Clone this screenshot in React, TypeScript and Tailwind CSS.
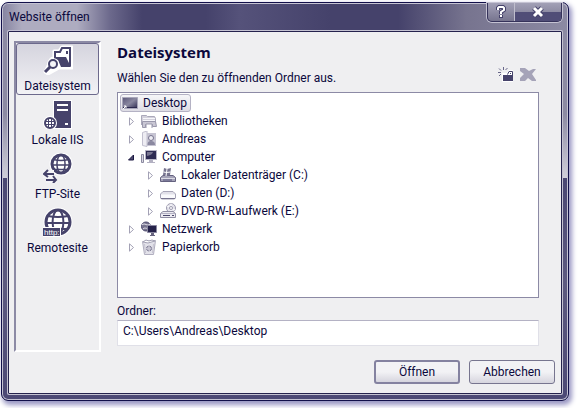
import React from "react";

const INK = "#46436b";

function FileSystemIcon() {
  return (
    <svg width="30" height="30" viewBox="0 0 30 30" aria-hidden="true">
      <path d="M11 6h5l3-4h10v21H16L5 29l-3-2 3-6 3-7 3-2z" fill="#fff" stroke="#fff" strokeWidth="3" strokeLinejoin="round" />
      <path d="M12 12V7h5l2-4h8v18" fill="none" stroke={INK} strokeWidth="2" />
      <path d="M11 12h12l5 10H18l-3-7-4-1z" fill={INK} />
      <path d="M23 6h2v3h-2z" fill={INK} />
      <circle cx="10" cy="19" r="6" fill="#fff" />
      <circle cx="10" cy="19" r="4" fill="#f4f4f7" stroke={INK} strokeWidth="2" />
      <path d="M7 22l-5 5" stroke={INK} strokeWidth="3" />
    </svg>
  );
}

type GlobeProps = { x: number; y: number; r: number; outline: number; line: number };

function Globe({ x, y, r, outline, line }: GlobeProps) {
  const dx = r * 0.85;
  const dy = r * 0.5;
  return (
    <g>
      <circle cx={x} cy={y} r={r + outline / 2 + 1} fill="#fff" />
      <g fill="none" stroke={INK} strokeWidth={line}>
        <circle cx={x} cy={y} r={r} strokeWidth={outline} />
        <ellipse cx={x} cy={y} rx={r * 0.45} ry={r} />
        <path d={`M${x - dx} ${y - dy}Q${x} ${y - dy + 2} ${x + dx} ${y - dy}M${x - r} ${y + 1}h${2 * r}M${x - dx} ${y + dy + 1}h${2 * dx}`} />
      </g>
    </g>
  );
}

function ServerIcon() {
  return (
    <svg width="30" height="30" viewBox="0 0 30 30" aria-hidden="true">
      <path d="M10 1h19v29H10z" fill="#fff" />
      <path d="M11 2h17v27H11z" fill={INK} />
      <path d="M14 5h11v2H14zM14 10h11v2H14zM22 24h3v2h-3z" fill="#fff" />
      <circle cx="7" cy="24" r="7" fill="#fff" />
      <g fill="none" stroke={INK}>
        <circle cx="7" cy="24" r="5" strokeWidth="2" />
        <path d="M2 22.500h10M2 25.500h10M5.500 19v10M8.500 19v10" />
      </g>
    </svg>
  );
}

function FtpIcon() {
  return (
    <svg width="30" height="30" viewBox="0 0 30 30" aria-hidden="true">
      <Globe x={18} y={11} r={9} outline={3} line={1.5} />
      <path d="M0 21h11M3 27h11" fill="none" stroke="#f4f4f7" strokeWidth="8" />
      <path d="M1 21h10M5 17l-4 4 4 3M3 27h10M10 23l3 4-3 3" fill="none" stroke={INK} strokeWidth="2" />
    </svg>
  );
}

function RemoteIcon() {
  return (
    <svg width="30" height="30" viewBox="0 0 30 30" aria-hidden="true">
      <Globe x={15} y={15} r={12} outline={3} line={2} />
      <path d="M0 20h18v10H0z" fill="#fff" />
      <path d="M0 21h17v8H0z" fill={INK} />
      <text x="1" y="28" fontSize="8" fontFamily="Liberation Sans, sans-serif" fill="#fff">http:</text>
    </svg>
  );
}

function NewFolderIcon() {
  return (
    <svg width="16" height="16" viewBox="0 0 16 16" aria-hidden="true">
      <path d="M0 5.500h3M1 1.500l2 2M5.500 0v3M9.500 1l-2 2M1 9l2-2" stroke="#69678a" fill="none" />
      <path d="M4 6h5l2-3h4v12H4z" fill="#fff" />
      <path d="M5 8h10v6H5z" fill={INK} />
      <path d="M9.500 7.500l1.500-3h3.500V9" fill="none" stroke={INK} />
      <path d="M12 6h1v1h-1z" fill={INK} />
    </svg>
  );
}

function DeleteIcon() {
  return (
    <svg width="16" height="14" viewBox="0 0 16 14" aria-hidden="true">
      <path d="M0 0h5l4 3 4-2h3l-4 5 4 6v1h-4l-4-3-3 3H0v-3l4-4-4-3z" fill="#a5a3b8" />
    </svg>
  );
}

function Svg16({ children }: { children: React.ReactNode }) {
  return (
    <svg width="16" height="16" viewBox="0 0 16 16" className="shrink-0" aria-hidden="true">
      {children}
    </svg>
  );
}

function DesktopIcon() {
  return (
    <Svg16>
      <defs>
        <linearGradient id="desk" x1="0" y1="0" x2="1" y2="1">
          <stop offset="0" stopColor="#5a5779" />
          <stop offset=".5" stopColor="#8a88a0" />
          <stop offset="1" stopColor="#2b284e" />
        </linearGradient>
      </defs>
      <path d="M.5 2.500h15v11H.5z" fill="url(#desk)" stroke="#a9a7ba" />
      <path d="M1 12.500h14" stroke="#2b284e" />
      <path d="M1 14l3-3M2 11h2v2" stroke="#fff" fill="none" />
    </Svg16>
  );
}

function LibraryIcon() {
  return (
    <Svg16>
      <path d="M.5 12V2.500h5l1 1h7l1 2V12" fill="#d3d1dc" stroke="#aaa8ba" />
      <path d="M2 5.500h12M2 7.500h12" stroke="#f6f6fa" />
      <path d="M1.500 8.500h13l1 5h-4v-2h-7v3h-3z" fill="#c9c7d4" stroke="#9a98ac" />
      <path d="M5 15v-4h6v4" fill="#fff" stroke="#9a98ac" />
    </Svg16>
  );
}

function UserIcon() {
  return (
    <Svg16>
      <path d="M1.500 1.500L6 0v15.500l-4.500-1z" fill="#eeedf3" stroke="#c2c0cf" />
      <path d="M6 2h9v13H6z" fill="#c6c4d2" />
      <circle cx="10" cy="7" r="2.500" fill="#eeeef3" stroke="#77748f" />
      <path d="M6.500 14c0-3 1-4 3.500-4s4 1 4 4z" fill="#8a88a0" />
    </Svg16>
  );
}

function ComputerIcon() {
  return (
    <Svg16>
      <path d="M.5 5.500h2v8h-2z" fill="#d8d7e1" stroke="#8b89a0" />
      <path d="M4.500 1.500h11v9h-11z" fill="#2d2a52" stroke="#b6b4c5" />
      <path d="M6 3h6c-1 3-3 3-6 4z" fill="#77748f" />
      <path d="M8 11h4v2h2v1H6v-1h2z" fill="#b3b1c2" />
    </Svg16>
  );
}

function SystemDriveIcon() {
  return (
    <Svg16>
      <path d="M3 8.500h10l2.500 2v4H.5v-4z" fill="#a5a3b8" stroke="#64617f" />
      <path d="M1 11.500h14" stroke="#dddce5" />
      <path d="M3 13h9" stroke="#55527a" />
      <path d="M4 1l3 1 4-1-1 7-3 1-4-1z" fill="#77748f" />
      <path d="M7 2L6 9M3.500 5l3 .5 4-.5" stroke="#fff" fill="none" />
    </Svg16>
  );
}

function DriveIcon() {
  return (
    <Svg16>
      <path d="M3 6.500h10l2.500 2.500v4l-1 1h-13l-1-1V9z" fill="#e2e1e9" stroke="#a6a4b6" />
      <path d="M1 9.500h14v3.500H1z" fill="#fafafc" />
      <path d="M1 13.500h14" stroke="#77748f" />
    </Svg16>
  );
}

function DvdIcon() {
  return (
    <Svg16>
      <circle cx="11" cy="5" r="4.500" fill="#e4e3eb" stroke="#9d9baf" />
      <path d="M11 .5v9M7 3l8 4" stroke="#fff" />
      <circle cx="11" cy="5" r="1.500" fill="#fff" stroke="#9d9baf" />
      <path d="M3 8.500h10l2.500 2v4H.5v-4z" fill="#ecebf1" stroke="#8f8da3" />
      <path d="M1 10.500h14" stroke="#b4b2c4" />
      <path d="M3 12.500h7M12 12.500h2" stroke="#4c496d" />
    </Svg16>
  );
}

function NetworkIcon() {
  return (
    <Svg16>
      <circle cx="5" cy="5.500" r="4.500" fill="#77748f" stroke="#4c496d" />
      <path d="M1 4c3-3 5 2 8-1M2 8c2-2 3 0 5-1" stroke="#e6e5ed" fill="none" />
      <path d="M6.500 4.500h9v7h-9z" fill="#25224a" stroke="#8a88a0" />
      <path d="M10 12h3v2h1v1H9v-1h1z" fill="#67647f" />
    </Svg16>
  );
}

function BinIcon() {
  return (
    <Svg16>
      <path d="M1.500 2.500l13-1-2 14h-9z" fill="#e3e2ea" stroke="#b0aebf" />
      <path d="M2 3l5 1 7-2-3-1-3 1-3-1z" fill="#fff" stroke="#a4a2b5" />
      <circle cx="8" cy="9.500" r="2.500" fill="#c6c4d1" stroke="#77748f" strokeDasharray="3 1" />
      <path d="M3.500 5l1 9M12.500 5l-1 9" stroke="#c6c4d1" />
    </Svg16>
  );
}

function Arrow({ open }: { open?: boolean }) {
  return (
    <svg width="7" height="9" viewBox="0 0 7 9" className="shrink-0" aria-hidden="true">
      {open ? (
        <path d="M5.500 2v5H.5z" fill="#4c496d" stroke="#1c1943" />
      ) : (
        <path d="M1.500 .8v7.400L5.500 4.500z" fill="#fff" stroke="#a3a1b5" />
      )}
    </svg>
  );
}

const places = [
  { label: "Dateisystem", Icon: FileSystemIcon },
  { label: "Lokale IIS", Icon: ServerIcon },
  { label: "FTP-Site", Icon: FtpIcon },
  { label: "Remotesite", Icon: RemoteIcon },
];

const nodes = [
  { label: "Bibliotheken", Icon: LibraryIcon, level: 2 },
  { label: "Andreas", Icon: UserIcon, level: 2 },
  { label: "Computer", Icon: ComputerIcon, level: 2, open: true },
  { label: "Lokaler Datenträger (C:)", Icon: SystemDriveIcon, level: 3 },
  { label: "Daten (D:)", Icon: DriveIcon, level: 3 },
  { label: "DVD-RW-Laufwerk (E:)", Icon: DvdIcon, level: 3 },
  { label: "Netzwerk", Icon: NetworkIcon, level: 2 },
  { label: "Papierkorb", Icon: BinIcon, level: 2 },
];

function TitleBar() {
  return (
    <header className="flex h-7 items-start justify-between">
      <h1 className="pt-[6px] pl-px text-xs leading-4">Website öffnen</h1>
      <div className="flex h-[19px] rounded-b-[5px] border border-t-0 border-[#35325a] bg-linear-to-b from-[#a2a0b6] via-[#8d8ba3] via-50% to-[#77758f] shadow-[0_0_0_1px_#c4c2d2]">
        <button type="button" aria-label="Hilfe" className="flex w-[27px] items-center justify-center border-r border-[#c0becd]">
          <svg width="12" height="14" viewBox="0 0 12 14" aria-hidden="true">
            <path d="M3 5V3l1-1h4l1 1v2L6 7v2M6 10v3" fill="none" stroke="#45426b" strokeWidth="4" />
            <path d="M3 5V3l1-1h4l1 1v2L6 7v2M6 10v2" fill="none" stroke="#fff" strokeWidth="2" />
          </svg>
        </button>
        <button type="button" aria-label="Schließen" className="flex w-[46px] items-center justify-center rounded-br-[4px] bg-linear-to-b from-transparent from-50% to-[#504d77] to-50%">
          <svg width="14" height="12" viewBox="0 0 14 12" aria-hidden="true">
            <path d="M3 2l8 8M11 2l-8 8" stroke="#45426b" strokeWidth="5" />
            <path d="M3 2l8 8M11 2l-8 8" stroke="#fff" strokeWidth="3" />
          </svg>
        </button>
      </div>
    </header>
  );
}

const frame =
  "rounded-[7px] border border-[#12104a] px-[6px] pb-[6px] shadow-[inset_0_0_0_1px_#c4c2d2,2px_3px_5px_1px_#9a98c4] [background:linear-gradient(to_right,#8583a0_0px,#aeacc0_20px,#aeacc0_75px,#6c698c_108px,#45426b_140px,#45426b_36%,#55527a_42%,#45426b_58%,#45426b_70%,#77748f_82%,#8c8aa3_100%)_0_0/100%_29px_no-repeat,linear-gradient(to_bottom,#8c8aa3_0%,#8c8aa3_28%,#d0cfda_44%,#4a4773_44%,#5d5a80_70%,#4c4975_100%)]";

export default function App() {
  return (
    <div className="min-h-screen bg-white pt-[2px] pr-[9px] pb-[7px] pl-px font-['Roboto','Open_Sans',sans-serif] text-xs text-[#0b083c]">
      <main className={frame}>
        <TitleBar />
        <div className="rounded-[1px] border border-[#25224d] bg-[#efeff1] pt-[9px] pb-[9px] pl-[5px] shadow-[0_0_0_1px_#c4c2d2]">
          <div className="flex pr-[22px]">
            <nav aria-label="Orte" className="flex w-[87px] shrink-0 flex-col gap-[2px] border-2 border-t-[#8c8aa5] border-r-white border-b-white border-l-[#8c8aa5]">
              {places.map(({ label, Icon }, i) => (
                <button
                  key={label}
                  type="button"
                  className={
                    i === 0
                      ? "flex h-[52px] flex-col items-center gap-[3px] rounded-[3px] border border-[#6c698c] bg-linear-to-b from-[#d5d4de] to-[#f2f2f5] pt-px"
                      : "flex h-[52px] flex-col items-center gap-[3px] border border-transparent pt-px"
                  }
                >
                  <Icon />
                  <span className="leading-4">{label}</span>
                </button>
              ))}
            </nav>
            <section className="flex min-w-0 grow flex-col pb-[6px] pl-4">
              <h2 className="font-['Open_Sans',sans-serif] text-[15px] leading-[22px] font-bold">Dateisystem</h2>
              <div className="flex h-[29px] items-center justify-between">
                <p>Wählen Sie den zu öffnenden Ordner aus.</p>
                <div className="flex items-center gap-[6px] self-start pt-1 pr-[3px]">
                  <button type="button" aria-label="Neuer Ordner"><NewFolderIcon /></button>
                  <button type="button" aria-label="Löschen" disabled><DeleteIcon /></button>
                </div>
              </div>
              <ul role="tree" aria-label="Ordnerstruktur" className="h-[206px] border border-[#8c8aa5] bg-white p-px leading-[18px]">
                <li role="treeitem" aria-selected="true" className="flex pl-px">
                  <span className="flex h-[18px] items-center gap-[5px] rounded-[3px] border border-[#b4b2c4] bg-linear-to-b from-[#f6f6f8] to-[#dddce4] pr-[3px] pl-px">
                    <DesktopIcon />
                    Desktop
                  </span>
                </li>
                {nodes.map(({ label, Icon, level, open }) => (
                  <li
                    key={label}
                    role="treeitem"
                    aria-selected="false"
                    aria-level={level}
                    className={level === 2 ? "flex h-[18px] items-center pl-[9px]" : "flex h-[18px] items-center pl-7"}
                  >
                    <Arrow open={open} />
                    <span className="flex items-center gap-[5px] pl-[6px]">
                      <Icon />
                      {label}
                    </span>
                  </li>
                ))}
              </ul>
              <label htmlFor="folder" className="pt-1 leading-[18px]">Ordner:</label>
              <input
                id="folder"
                type="text"
                defaultValue="C:\Users\Andreas\Desktop"
                className="h-[26px] border border-[#e0e0e8] border-t-[#b4b2c4] bg-white px-[5px] pb-1 outline-none"
              />
            </section>
          </div>
          <div className="flex justify-end gap-[9px] pt-2 pr-[6px]">
            <button type="button" className="h-6 w-[86px] rounded-[3px] border-2 border-[#8482a0] bg-linear-to-b from-[#f2f2f5] from-50% to-[#d6d5de]">Öffnen</button>
            <button type="button" className="h-6 w-[86px] rounded-[3px] border border-[#77758f] bg-linear-to-b from-[#f2f2f5] from-50% to-[#d6d5de]">Abbrechen</button>
          </div>
        </div>
      </main>
    </div>
  );
}
